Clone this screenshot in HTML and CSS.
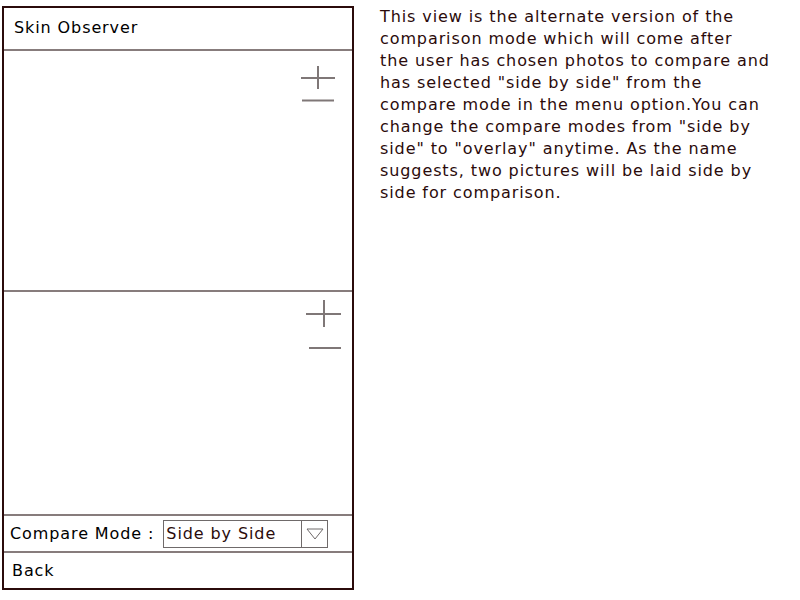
FILE: index.html
```html
<!DOCTYPE html>
<html lang="en">
<head>
  <meta charset="UTF-8" />
  <title>Skin Observer - Side by Side</title>
  <link rel="stylesheet" href="styles.css">
</head>
<body>
  <div class="page">
    <div class="phone">
      <div class="header">Skin Observer</div>

      <div class="photo photo-top">
        <svg class="zoom zoom-top" width="34" height="36" viewBox="0 0 34 36" aria-label="Zoom">
          <line x1="0" y1="12" x2="34" y2="12" />
          <line x1="17" y1="0" x2="17" y2="23" />
          <line x1="1" y1="34.5" x2="33" y2="34.5" />
        </svg>
      </div>

      <div class="photo photo-bottom">
        <svg class="zoom zoom-bottom" width="35" height="50" viewBox="0 0 35 50" aria-label="Zoom">
          <line x1="0" y1="14" x2="35" y2="14" />
          <line x1="18" y1="0" x2="18" y2="27" />
          <line x1="3" y1="48" x2="35" y2="48" />
        </svg>
      </div>

      <div class="mode-row">
        <span class="mode-label">Compare Mode :</span>
        <div class="select">
          <span class="select-value">Side by Side</span>
          <span class="select-arrow">
            <svg width="18" height="12" viewBox="0 0 18 12">
              <polygon points="1,1 17,1 9,11" />
            </svg>
          </span>
        </div>
      </div>

      <div class="back">Back</div>
    </div>

    <!-- line breaks kept as laid out in the mockup note -->
    <p class="note">This view is the alternate version of the<br>
      comparison mode which will come after<br>
      the user has chosen photos to compare and<br>
      has selected "side by side" from the<br>
      compare mode in the menu option.You can<br>
      change the compare modes from "side by<br>
      side" to "overlay" anytime. As the name<br>
      suggests, two pictures will be laid side by<br>
      side for comparison.</p>
  </div>
</body>
</html>
```

FILE: styles.css
```css
:root {
  --frame: #2b0b0b;
  --rule: #877c7c;
  --icon: #7f7777;
  --font-family: 'DejaVu Sans', 'Liberation Sans', sans-serif;
}

body {
  margin: 0;
  background: #fff;
  font-family: var(--font-family);
  font-size: 16px;
  line-height: 22px;
  letter-spacing: 0.9px;
  color: #000;
}

.page {
  display: flex;
  align-items: flex-start;
  gap: 26px;
  padding: 6px 0 0 2px;
}

.phone {
  width: 348px;
  height: 580px;
  border: 2px solid var(--frame);
  display: flex;
  flex-direction: column;
  flex-shrink: 0;
}

.header {
  height: 43px;
  box-sizing: border-box;
  padding: 9px 10px;
  border-bottom: 2px solid var(--rule);
}

.photo {
  position: relative;
  border-bottom: 2px solid var(--rule);
}

.photo-top {
  height: 239px;
}

.photo-bottom {
  height: 222px;
}

.zoom {
  position: absolute;
  stroke: var(--icon);
  stroke-width: 2;
}

.zoom-top {
  top: 15px;
  right: 17px;
}

.zoom-bottom {
  top: 8px;
  right: 11px;
}

.mode-row {
  height: 34px;
  display: flex;
  align-items: center;
  gap: 9px;
  padding: 1px 0 0 6px;
  border-bottom: 2px solid var(--rule);
}

.select {
  width: 163px;
  height: 26px;
  border: 1px solid #6f6a6a;
  display: flex;
  align-items: center;
  flex-shrink: 0;
}

.select-value {
  flex: 1;
  padding-left: 2px;
  color: var(--frame);
  white-space: nowrap;
}

.select-arrow {
  width: 25px;
  height: 100%;
  border-left: 1px solid #6f6a6a;
  display: flex;
  align-items: center;
  justify-content: center;
}

.select-arrow polygon {
  fill: none;
  stroke: #6f6a6a;
  stroke-width: 1;
}

.back {
  flex: 1;
  display: flex;
  align-items: center;
  padding-left: 8px;
}

.note {
  margin: 0;
  color: var(--frame);
  white-space: nowrap;
}
```
